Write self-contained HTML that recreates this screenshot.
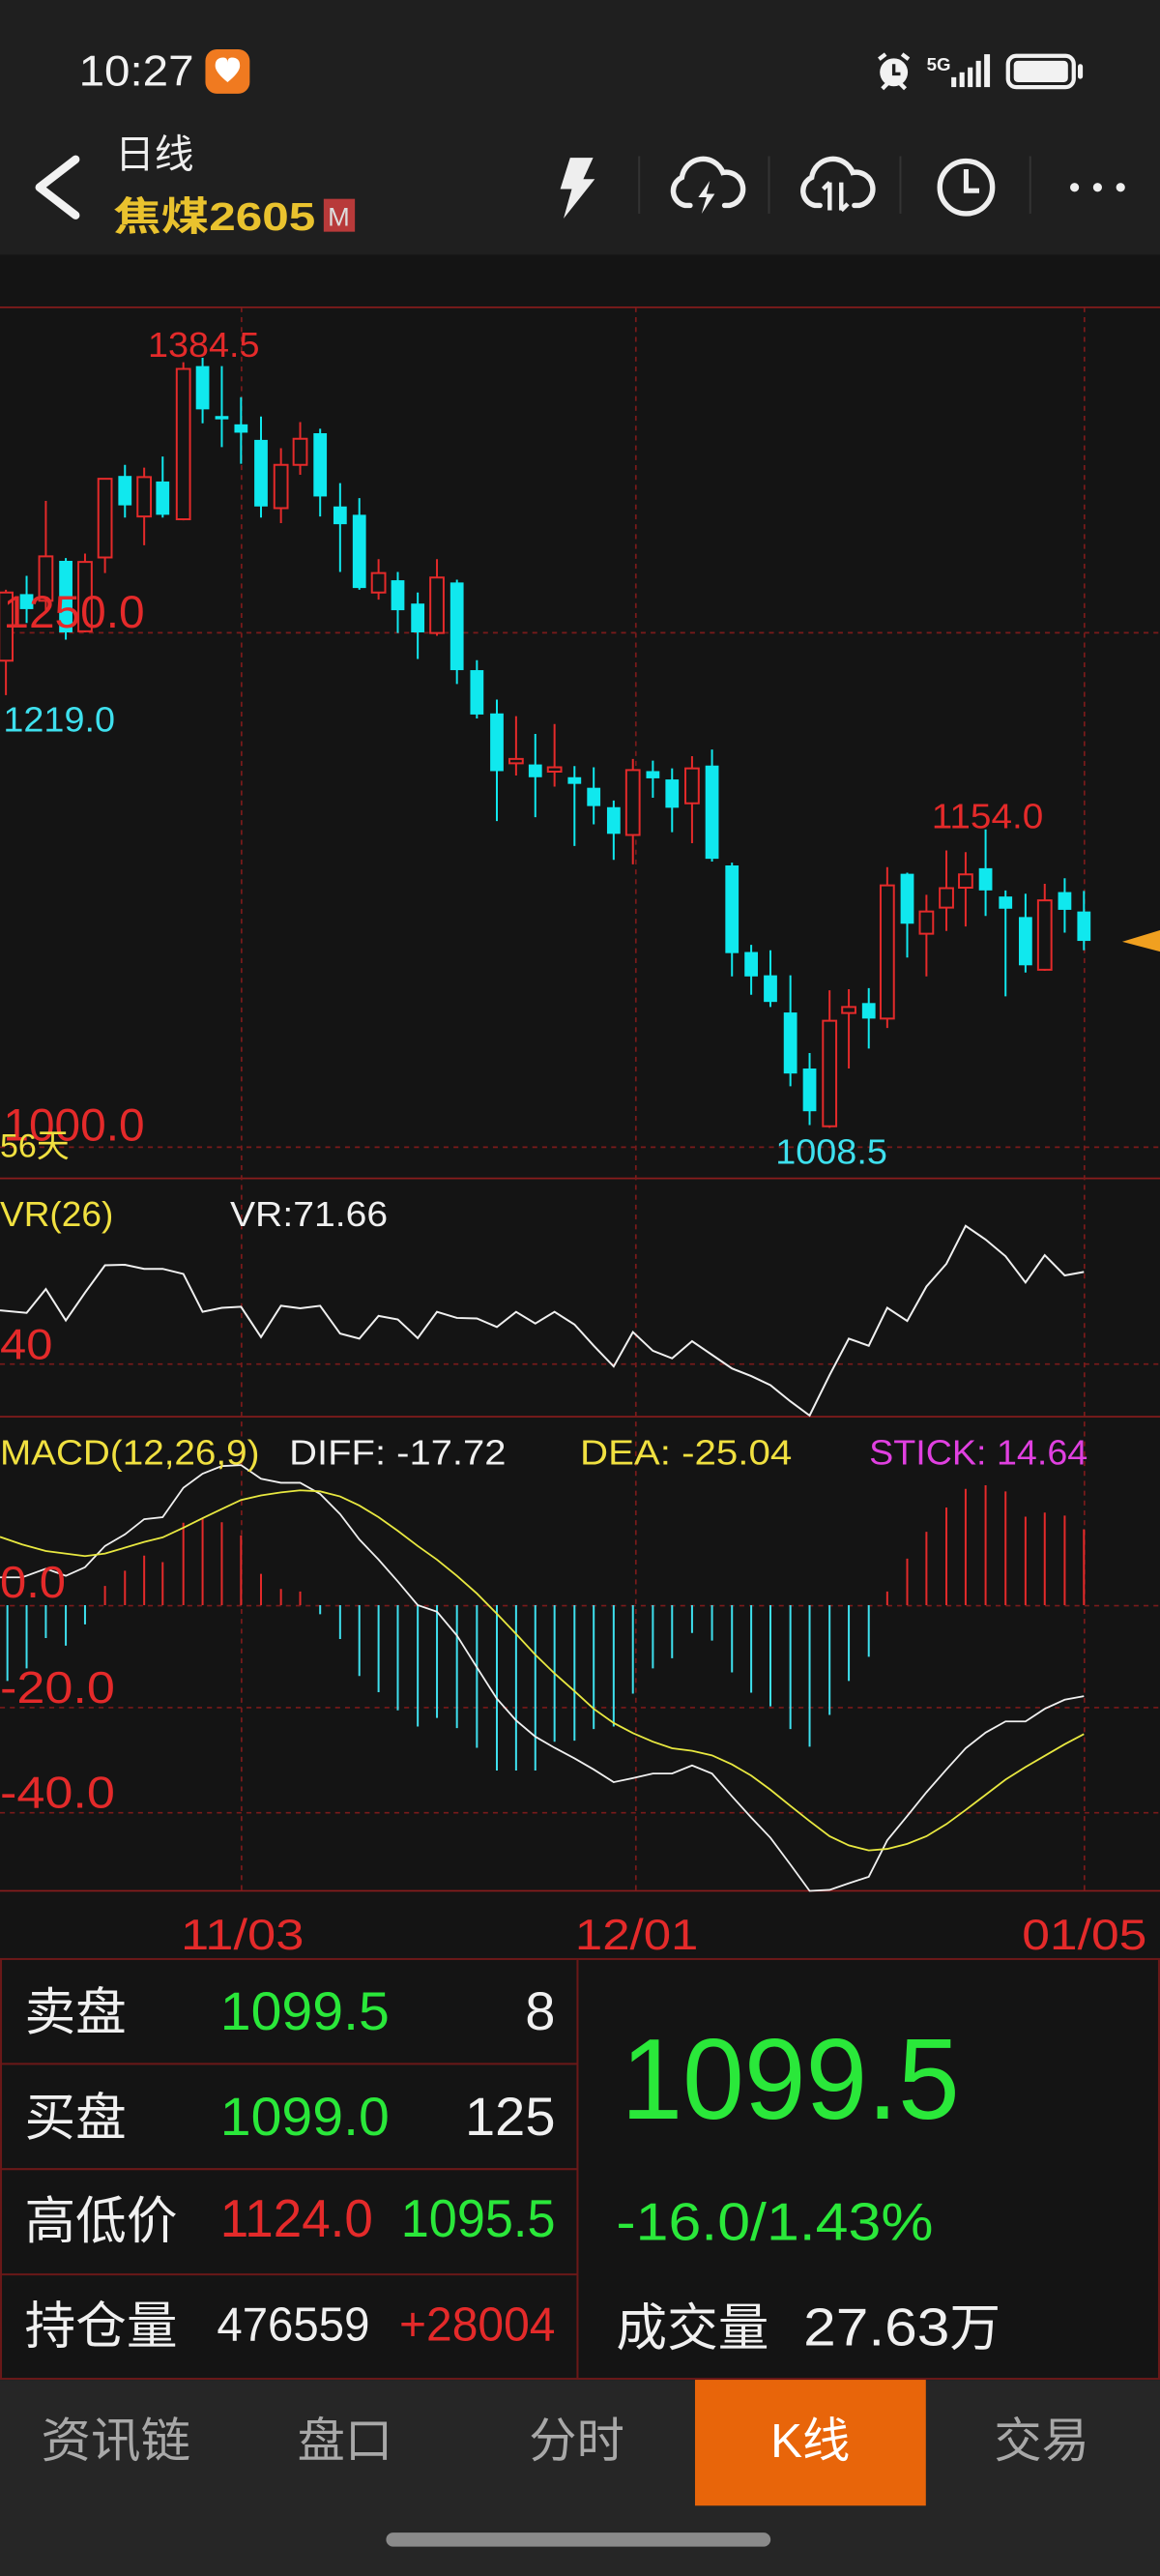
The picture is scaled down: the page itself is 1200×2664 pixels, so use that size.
<!DOCTYPE html>
<html><head><meta charset="utf-8"><style>
html,body{margin:0;padding:0;background:#141414;width:1200px;height:2664px;overflow:hidden}
svg{display:block}
text{font-family:"Liberation Sans","Noto Sans CJK SC",sans-serif}
</style></head><body>
<svg width="1200" height="2664" viewBox="0 0 706 1567.4" preserveAspectRatio="none" xmlns="http://www.w3.org/2000/svg">
<rect x="0" y="0" width="706" height="1567.4" fill="#141414"/>
<rect x="0" y="0" width="706" height="155" fill="#1f1f1f"/>
<text x="48" y="52" fill="#f2f2f2" font-size="26" textLength="70" lengthAdjust="spacingAndGlyphs">10:27</text>
<rect x="125" y="30" width="27" height="27" rx="7" fill="#f07a20"/>
<path d="M131 40 q0-5 5-5 q2.5 0 2.5 3 q0-3 2.5-3 q5 0 5 5 q0 4-7.5 10 q-7.5-6-7.5-10z" fill="#fff"/>
<circle cx="544" cy="44" r="8.5" fill="#f2f2f2"/><path d="M544 39 V45 H548" stroke="#1f1f1f" stroke-width="2" fill="none"/>
<path d="M535 36 l4-3 M553 36 l-4-3 M537 54 l3-3 M551 54 l-3-3" stroke="#f2f2f2" stroke-width="2.5"/>
<text x="564" y="43" fill="#f2f2f2" font-size="11" font-weight="bold">5G</text>
<rect x="579" y="47" width="3" height="6" fill="#f2f2f2"/><rect x="584" y="44" width="3" height="9" fill="#f2f2f2"/><rect x="589" y="41" width="3" height="12" fill="#f2f2f2"/><rect x="594" y="37" width="3" height="16" fill="#f2f2f2"/><rect x="599" y="33" width="3.5" height="20" fill="#f2f2f2"/>
<rect x="613.5" y="34" width="40" height="19" rx="5" fill="none" stroke="#f2f2f2" stroke-width="2.5"/>
<rect x="617" y="37" width="33" height="13" rx="2.5" fill="#f2f2f2"/><rect x="656" y="39" width="3" height="9" rx="1.5" fill="#f2f2f2"/>
<path d="M46 97 L24 114 L46 131" stroke="#f2f2f2" stroke-width="5" fill="none" stroke-linecap="round" stroke-linejoin="round"/>
<text x="70" y="102" fill="#eeeeee" font-size="24">日线</text>
<text x="69" y="140" fill="#e9c22e" font-size="24" font-weight="bold" textLength="123" lengthAdjust="spacingAndGlyphs">焦煤2605</text>
<rect x="197" y="121" width="19" height="20" fill="#b83a3a"/><text x="199.5" y="137.5" fill="#ddd" font-size="16">M</text>
<path d="M347 96 L361 96 L355 109 L362 109 L343 133 L348 115 L341 115 Z" fill="#eeeeee"/>
<g stroke="#333" stroke-width="1.2"><line x1="389" y1="95" x2="389" y2="130"/><line x1="468" y1="95" x2="468" y2="130"/><line x1="548" y1="95" x2="548" y2="130"/><line x1="627" y1="95" x2="627" y2="130"/></g>
<path d="M420 125 h-3 a9 9 0 0 1 -2-17 a13 13 0 0 1 25-3 a9 9 0 0 1 4 20 h-3" fill="none" stroke="#eeeeee" stroke-width="3.2" stroke-linecap="round"/>
<path d="M432 110 L425 120 L430 120 L427 130 L435 118 L430 118 Z" fill="#eeeeee"/>
<path d="M499 125 h-3 a9 9 0 0 1 -2-17 a13 13 0 0 1 25-3 a9 9 0 0 1 4 20 h-3" fill="none" stroke="#eeeeee" stroke-width="3.2" stroke-linecap="round"/>
<path d="M505 128 V111 M501 115 l4-4 M512 111 V128 M512 128 l4-4" stroke="#eeeeee" stroke-width="2.6" fill="none"/>
<circle cx="588" cy="114" r="16" fill="none" stroke="#eeeeee" stroke-width="3.2"/><path d="M588 103 V116 H596" fill="none" stroke="#eeeeee" stroke-width="3"/>
<circle cx="654" cy="114" r="2.7" fill="#eee"/><circle cx="668" cy="114" r="2.7" fill="#eee"/><circle cx="682" cy="114" r="2.7" fill="#eee"/>

<g stroke="#8a1c1c" stroke-width="1">
<line x1="0" y1="187" x2="706" y2="187"/>
<line x1="0" y1="717" x2="706" y2="717"/>
<line x1="0" y1="862" x2="706" y2="862"/>
<line x1="0" y1="1150.5" x2="706" y2="1150.5"/>
</g>
<g stroke="#7a1a1a" stroke-width="1" stroke-dasharray="3,3">
<line x1="0" y1="385" x2="706" y2="385"/>
<line x1="0" y1="698" x2="706" y2="698"/>
<line x1="0" y1="830" x2="706" y2="830"/>
<line x1="0" y1="977" x2="706" y2="977"/>
<line x1="0" y1="1039" x2="706" y2="1039"/>
<line x1="0" y1="1103" x2="706" y2="1103"/>
<line x1="147" y1="187" x2="147" y2="1150"/>
<line x1="387" y1="187" x2="387" y2="1150"/>
<line x1="660" y1="187" x2="660" y2="1150"/>
</g>

<g transform="translate(0,176.5) scale(0.45,0.3376)">
<path vector-effect="non-scaling-stroke" stroke="#10e8ee" stroke-width="2" d="M36 515V600M89 483V630M169 315V410M220 300V410M274 122V240M300 137V283M326 193V313M353 228V410M433 250V408M460 348V508M486 375V540M538 508V618M565 545V665M618 522V710M645 667V772M672 738V957M724 800V950M777 858V1002M803 860V963M830 920V1027M883 848V915M909 862V977M963 828V1030M990 1032V1237M1016 1180V1270M1042 1190V1292M1069 1235V1435M1095 1375V1505M1175 1258V1367M1227 1050V1203M1333 972V1128M1360 1082V1273M1387 1088V1230M1440 1060V1158M1466 1083V1190"/>
<g fill="#10e8ee">
<rect x="27" y="548" width="18" height="27"/><rect x="80" y="488" width="18" height="129"/><rect x="160" y="335" width="18" height="53"/><rect x="211" y="345" width="18" height="60"/><rect x="265" y="137" width="18" height="78"/><rect x="291" y="227" width="18" height="6"/><rect x="317" y="242" width="18" height="15"/><rect x="344" y="270" width="18" height="120"/><rect x="424" y="258" width="18" height="114"/><rect x="451" y="390" width="18" height="32"/><rect x="477" y="405" width="18" height="132"/><rect x="529" y="523" width="18" height="54"/><rect x="556" y="565" width="18" height="52"/><rect x="609" y="527" width="18" height="158"/><rect x="636" y="685" width="18" height="80"/><rect x="663" y="763" width="18" height="104"/><rect x="715" y="855" width="18" height="23"/><rect x="768" y="878" width="18" height="12"/><rect x="794" y="897" width="18" height="33"/><rect x="821" y="932" width="18" height="48"/><rect x="874" y="867" width="18" height="13"/><rect x="900" y="882" width="18" height="51"/><rect x="954" y="857" width="18" height="168"/><rect x="981" y="1037" width="18" height="158"/><rect x="1007" y="1193" width="18" height="44"/><rect x="1033" y="1235" width="18" height="48"/><rect x="1060" y="1302" width="18" height="110"/><rect x="1086" y="1403" width="18" height="77"/><rect x="1166" y="1285" width="18" height="28"/><rect x="1218" y="1052" width="18" height="90"/><rect x="1324" y="1042" width="18" height="40"/><rect x="1351" y="1093" width="18" height="22"/><rect x="1378" y="1130" width="18" height="87"/><rect x="1431" y="1085" width="18" height="32"/><rect x="1457" y="1120" width="18" height="53"/>
</g>
<path vector-effect="non-scaling-stroke" stroke="#e42a2a" stroke-width="2" fill="none" d="M8 540V730M62 380V580M115 475V617M142 340V510M195 320V460M248 130V415M380 285V420M406 238V333M512 485V558M591 485V623M698 768V875M750 782V895M856 845V1035M936 840V997M1122 1262V1510M1148 1260V1403M1200 1040V1330M1253 1090V1237M1280 1010V1155M1306 1013V1147M1413 1070V1227"/>
<g fill="#141414" stroke="#e42a2a" stroke-width="2">
<rect vector-effect="non-scaling-stroke" x="-1" y="545" width="18" height="123"/><rect vector-effect="non-scaling-stroke" x="53" y="480" width="18" height="80"/><rect vector-effect="non-scaling-stroke" x="106" y="490" width="18" height="125"/><rect vector-effect="non-scaling-stroke" x="133" y="340" width="18" height="142"/><rect vector-effect="non-scaling-stroke" x="186" y="337" width="18" height="71"/><rect vector-effect="non-scaling-stroke" x="239" y="142" width="18" height="271"/><rect vector-effect="non-scaling-stroke" x="371" y="315" width="18" height="78"/><rect vector-effect="non-scaling-stroke" x="397" y="268" width="18" height="47"/><rect vector-effect="non-scaling-stroke" x="503" y="510" width="18" height="35"/><rect vector-effect="non-scaling-stroke" x="582" y="518" width="18" height="100"/><rect vector-effect="non-scaling-stroke" x="689" y="845" width="18" height="8"/><rect vector-effect="non-scaling-stroke" x="741" y="860" width="18" height="8"/><rect vector-effect="non-scaling-stroke" x="847" y="865" width="18" height="117"/><rect vector-effect="non-scaling-stroke" x="927" y="862" width="18" height="63"/><rect vector-effect="non-scaling-stroke" x="1113" y="1317" width="18" height="190"/><rect vector-effect="non-scaling-stroke" x="1139" y="1292" width="18" height="11"/><rect vector-effect="non-scaling-stroke" x="1191" y="1073" width="18" height="240"/><rect vector-effect="non-scaling-stroke" x="1244" y="1120" width="18" height="40"/><rect vector-effect="non-scaling-stroke" x="1271" y="1078" width="18" height="35"/><rect vector-effect="non-scaling-stroke" x="1297" y="1053" width="18" height="24"/><rect vector-effect="non-scaling-stroke" x="1404" y="1100" width="18" height="125"/>
</g>
</g>
<path d="M683 573 L706 566 L706 579 Z" fill="#f0a020"/>
<text x="90" y="217" fill="#e42a2a" font-size="21" textLength="68" lengthAdjust="spacingAndGlyphs">1384.5</text>
<text x="2" y="382" fill="#e42a2a" font-size="28" textLength="86" lengthAdjust="spacingAndGlyphs">1250.0</text>
<text x="2" y="445" fill="#3ee0ee" font-size="21" textLength="68" lengthAdjust="spacingAndGlyphs">1219.0</text>
<text x="2" y="694" fill="#e42a2a" font-size="28" textLength="86" lengthAdjust="spacingAndGlyphs">1000.0</text>
<text x="0" y="704" fill="#f0e040" font-size="20">56天</text>
<text x="567" y="504" fill="#e42a2a" font-size="21" textLength="68" lengthAdjust="spacingAndGlyphs">1154.0</text>
<text x="472" y="708" fill="#3ee0ee" font-size="21" textLength="68" lengthAdjust="spacingAndGlyphs">1008.5</text>

<g transform="translate(0,705.9) scale(0.45,0.3077)" fill="none">
<path vector-effect="non-scaling-stroke" stroke="#f0f0f0" stroke-width="2" d="M0 297L36 302L62 255L89 317L115 262L142 208L169 207L195 215L220 215L248 225L274 300L300 292L326 290L353 350L380 288L406 293L433 288L460 343L486 353L512 308L538 315L565 352L591 300L618 312L645 313L672 330L698 300L724 323L750 300L777 325L803 367L830 408L856 340L883 377L909 392L936 358L963 385L990 412L1016 427L1042 445L1069 477L1095 505L1122 425L1148 353L1175 367L1200 292L1227 318L1253 250L1280 205L1306 130L1333 157L1360 190L1387 242L1413 188L1440 228L1466 221"/>
<path vector-effect="non-scaling-stroke" stroke="#3ee0ee" stroke-width="2" d="M10 880V1030M36 880V1005M62 880V945M89 880V960M115 880V918M433 880V898M460 880V947M486 880V1020M512 880V1052M538 880V1088M565 880V1120M591 880V1103M618 880V1123M645 880V1162M672 880V1207M698 880V1207M724 880V1207M750 880V1150M777 880V1148M803 880V1125M830 880V1120M856 880V1055M883 880V1005M909 880V985M936 880V935M963 880V950M990 880V1013M1016 880V1053M1042 880V1080M1069 880V1125M1095 880V1160M1122 880V1097M1148 880V1030M1175 880V982"/>
<path vector-effect="non-scaling-stroke" stroke="#e42a2a" stroke-width="2" d="M142 880V842M169 880V812M195 880V782M220 880V795M248 880V717M274 880V708M300 880V716M326 880V742M353 880V818M380 880V848M406 880V853M1200 880V853M1227 880V788M1253 880V735M1280 880V687M1306 880V650M1333 880V643M1360 880V655M1387 880V705M1413 880V697M1440 880V703M1466 880V730"/>
<path vector-effect="non-scaling-stroke" stroke="#f0f0f0" stroke-width="1.8" d="M0 825L30 825L62 808L89 822L115 805L142 763L169 740L195 710L220 706L248 648L274 620L300 605L326 603L353 630L380 638L406 638L433 660L460 700L486 750L512 790L538 833L565 880L591 893L618 940L645 1003L672 1065L698 1108L724 1140L750 1162L777 1183L803 1205L830 1230L856 1222L883 1213L909 1213L936 1197L963 1213L990 1258L1016 1300L1042 1340L1069 1393L1095 1445L1122 1443L1148 1430L1175 1417L1200 1345L1227 1297L1253 1250L1280 1205L1306 1163L1333 1132L1360 1110L1387 1110L1413 1085L1440 1067L1466 1060"/>
<path vector-effect="non-scaling-stroke" stroke="#e8e840" stroke-width="1.8" d="M0 745L30 760L62 773L115 783L142 778L195 755L220 746L248 727L274 708L300 690L326 672L353 663L380 657L406 653L433 655L460 665L486 683L512 706L538 733L565 763L591 790L618 822L645 857L672 897L698 937L724 978L750 1015L777 1050L803 1085L830 1113L856 1133L883 1150L909 1163L936 1168L963 1177L990 1195L1016 1217L1042 1245L1069 1277L1095 1307L1122 1337L1148 1355L1175 1365L1200 1362L1227 1352L1253 1337L1280 1313L1306 1285L1333 1255L1360 1225L1387 1200L1413 1178L1440 1155L1466 1135"/>
</g>
<text x="0" y="746" fill="#f0e040" font-size="21" textLength="69" lengthAdjust="spacingAndGlyphs">VR(26)</text>
<text x="140" y="746" fill="#f0f0f0" font-size="21" textLength="96" lengthAdjust="spacingAndGlyphs">VR:71.66</text>
<text x="0" y="827" fill="#e42a2a" font-size="26" textLength="32" lengthAdjust="spacingAndGlyphs">40</text>
<text x="0" y="891" fill="#f0e040" font-size="21" textLength="158" lengthAdjust="spacingAndGlyphs">MACD(12,26,9)</text>
<text x="176" y="891" fill="#f0f0f0" font-size="21" textLength="132" lengthAdjust="spacingAndGlyphs">DIFF: -17.72</text>
<text x="353" y="891" fill="#f0e040" font-size="21" textLength="129" lengthAdjust="spacingAndGlyphs">DEA: -25.04</text>
<text x="529" y="891" fill="#e040e0" font-size="21" textLength="133" lengthAdjust="spacingAndGlyphs">STICK: 14.64</text>
<text x="0" y="972" fill="#e42a2a" font-size="27" textLength="40" lengthAdjust="spacingAndGlyphs">0.0</text>
<text x="0" y="1036" fill="#e42a2a" font-size="27" textLength="70" lengthAdjust="spacingAndGlyphs">-20.0</text>
<text x="0" y="1100" fill="#e42a2a" font-size="27" textLength="70" lengthAdjust="spacingAndGlyphs">-40.0</text>
<text x="110" y="1186" fill="#e42a2a" font-size="26" textLength="75" lengthAdjust="spacingAndGlyphs">11/03</text>
<text x="350" y="1186" fill="#e42a2a" font-size="26" textLength="75" lengthAdjust="spacingAndGlyphs">12/01</text>
<text x="622" y="1186" fill="#e42a2a" font-size="26" textLength="76" lengthAdjust="spacingAndGlyphs">01/05</text>

<g stroke="#6a1818" stroke-width="1.2" fill="none">
<rect x="0.6" y="1192" width="704.8" height="255.4"/>
<line x1="351.5" y1="1192" x2="351.5" y2="1447.4"/>
<line x1="0" y1="1255.8" x2="351.5" y2="1255.8"/>
<line x1="0" y1="1319.8" x2="351.5" y2="1319.8"/>
<line x1="0" y1="1383.9" x2="351.5" y2="1383.9"/>
</g>
<g font-size="31" fill="#f0f0f0">
<text x="15" y="1235">卖盘</text>
<text x="15" y="1299">买盘</text>
<text x="15" y="1362">高低价</text>
<text x="15" y="1426">持仓量</text>
</g>
<text x="134" y="1235" fill="#2ae83a" font-size="33" textLength="103" lengthAdjust="spacingAndGlyphs">1099.5</text>
<text x="338" y="1235" fill="#f0f0f0" font-size="33" text-anchor="end">8</text>
<text x="134" y="1299" fill="#2ae83a" font-size="33" textLength="103" lengthAdjust="spacingAndGlyphs">1099.0</text>
<text x="283" y="1299" fill="#f0f0f0" font-size="33" textLength="55" lengthAdjust="spacingAndGlyphs">125</text>
<text x="134" y="1361" fill="#e42a2a" font-size="32" textLength="93" lengthAdjust="spacingAndGlyphs">1124.0</text>
<text x="244" y="1361" fill="#2ae83a" font-size="32" textLength="94" lengthAdjust="spacingAndGlyphs">1095.5</text>
<text x="132" y="1424" fill="#f0f0f0" font-size="29" textLength="93" lengthAdjust="spacingAndGlyphs">476559</text>
<text x="243" y="1424" fill="#e42a2a" font-size="29" textLength="95" lengthAdjust="spacingAndGlyphs">+28004</text>
<text x="378" y="1289" fill="#2ae83a" font-size="70" textLength="206" lengthAdjust="spacingAndGlyphs">1099.5</text>
<text x="375" y="1363" fill="#2ae83a" font-size="32" textLength="193" lengthAdjust="spacingAndGlyphs">-16.0/1.43%</text>
<text x="375" y="1427" fill="#f0f0f0" font-size="31">成交量</text>
<text x="489" y="1427" fill="#f0f0f0" font-size="32" textLength="89" lengthAdjust="spacingAndGlyphs">27.63</text>
<text x="578" y="1427" fill="#f0f0f0" font-size="31">万</text>

<rect x="0" y="1448" width="706" height="120" fill="#262626"/>
<rect x="423" y="1448" width="140.5" height="76.6" fill="#e8650a"/>
<g font-size="29" fill="#a8a8a8">
<text x="25" y="1495" textLength="91" lengthAdjust="spacingAndGlyphs">资讯链</text>
<text x="181" y="1495">盘口</text>
<text x="322" y="1495">分时</text>
<text x="605" y="1495">交易</text>
</g>
<text x="469" y="1495" fill="#fff" font-size="29">K线</text>
<rect x="235" y="1541" width="234" height="8.5" rx="4.25" fill="#8a8a8a"/>
</svg>
</body></html>
